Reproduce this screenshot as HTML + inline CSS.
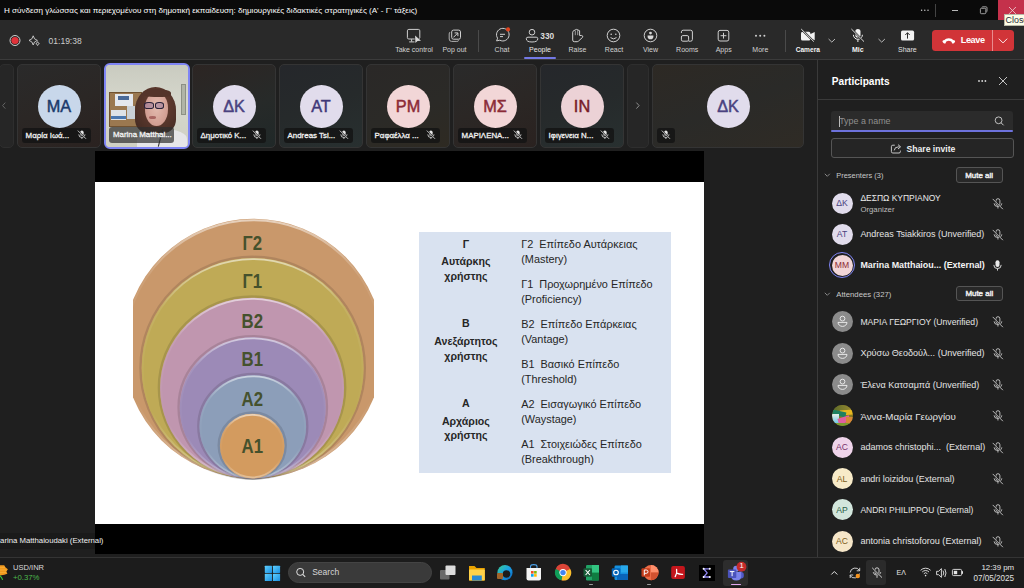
<!DOCTYPE html>
<html><head><meta charset="utf-8">
<style>
*{box-sizing:border-box;margin:0;padding:0}
html,body{width:1024px;height:588px;overflow:hidden;background:#1f1f1f;font-family:"Liberation Sans",sans-serif;color:#fff}
.a{position:absolute}
.t{position:absolute;white-space:nowrap;line-height:1}
svg{position:absolute;overflow:visible}
#titlebar{left:0;top:0;width:1024px;height:20px;background:#0a0a0a}
#toolbar{left:0;top:20px;width:1024px;height:39px;background:#292929}
#tbline{left:0;top:59px;width:1024px;height:1px;background:#3b3b3b}
.lbl{position:absolute;top:46px;font-size:7px;color:#d2d2d2;white-space:nowrap;line-height:8px;transform:translateX(-50%)}
.sep{position:absolute;width:1px;background:#4a4a4a}
.tile{position:absolute;top:64px;width:84px;height:84px;border-radius:5px;border:1px solid #343434;overflow:hidden}
.av{position:absolute;border-radius:50%;display:flex;align-items:center;justify-content:center;font-weight:400}
.nm{position:absolute;left:4.2px;top:62.6px;height:15.3px;border-radius:3px;background:rgba(20,20,20,.85);font-size:7.9px;font-weight:400;-webkit-text-stroke:0.3px;color:#f0f0f0;line-height:15px;padding-left:5px;white-space:nowrap}
.prow{position:absolute;left:818px;width:206px;height:31px}
.pav{position:absolute;left:14px;top:5px;width:21px;height:21px;border-radius:50%;display:flex;align-items:center;justify-content:center;font-size:8.5px}
.pn{position:absolute;left:42px;top:10px;font-size:9px;color:#e6e6e6;white-space:nowrap;line-height:10px}
.mic{position:absolute;left:173px;top:9px}
.tb{position:absolute;top:573px}
</style></head>
<body>
<!-- TITLE BAR -->
<div id="titlebar" class="a"></div>
<div class="t" style="left:4px;top:7.4px;font-size:8.05px;color:#ffffff">Η σύνδεση γλώσσας και περιεχομένου στη δημοτική εκπαίδευση: δημιουργικές διδακτικές στρατηγικές (Α' - Γ' τάξεις)</div>
<!-- window controls -->
<svg style="left:0;top:0" width="1" height="1"><circle cx="921.6" cy="10.3" r="0.75" fill="#c8c8c8"/><circle cx="924.8" cy="10.3" r="0.75" fill="#c8c8c8"/><circle cx="928" cy="10.3" r="0.75" fill="#c8c8c8"/></svg>
<div class="a" style="left:935px;top:4px;width:1px;height:13px;background:#444"></div>
<div class="a" style="left:951.5px;top:10px;width:6.5px;height:0.8px;background:#b8b8b8"></div>
<svg style="left:0;top:0" width="1" height="1"><rect x="980.4" y="8.3" width="5.4" height="5.4" rx="1" fill="none" stroke="#c0c0c0" stroke-width="0.8"/><path d="M981.8 7.4 Q982 6.8 982.8 6.8 H986 Q987 6.8 987 7.8 V11 Q987 11.8 986.4 12.1" fill="none" stroke="#c0c0c0" stroke-width="0.8"/></svg>
<div class="a" style="left:998px;top:0;width:26px;height:20.6px;background:#c4314b"></div>
<svg style="left:1008.9px;top:7.1px" width="8" height="8"><path d="M0 0L6.9 6.9M6.9 0L0 6.9" stroke="#f0d8dc" stroke-width="0.8"/></svg>

<!-- TOOLBAR -->
<div id="toolbar" class="a"></div>
<div id="tbline" class="a"></div>

<!-- left: record, sparkle, timer -->
<svg style="left:0;top:0" width="1" height="1">
 <circle cx="15" cy="40.5" r="5" fill="none" stroke="#cfcfcf" stroke-width="1"/>
 <circle cx="15" cy="40.5" r="3.6" fill="#e0323a"/>
 <path d="M33.2 35.8 Q33.8 39.6 37.4 40.4 Q33.8 41.2 33.2 45 Q32.6 41.2 29 40.4 Q32.6 39.6 33.2 35.8Z" fill="none" stroke="#cfcfcf" stroke-width="0.9" stroke-linejoin="round"/>
 <path d="M37.6 41.6 Q37.9 43.2 39.4 43.6 Q37.9 44 37.6 45.6 Q37.3 44 35.8 43.6 Q37.3 43.2 37.6 41.6Z" fill="none" stroke="#cfcfcf" stroke-width="0.8" stroke-linejoin="round"/>
</svg>
<div class="t" style="left:48.6px;top:37px;font-size:8.5px;color:#cccccc">01:19:38</div>

<!-- Take control -->
<svg style="left:0;top:0" width="1" height="1">
 <rect x="407.4" y="29.4" width="12.4" height="9.6" rx="1.4" fill="none" stroke="#d0d0d0" stroke-width="1"/>
 <path d="M411.6 39.2 V41.6 M409.2 41.9 H414.6" stroke="#d0d0d0" stroke-width="1"/>
 <path d="M415.1 35.6 L415.4 42.9 L417.5 40.9 L421 40.7 Z" fill="#d8d8d8" stroke="#292929" stroke-width="1.1" stroke-linejoin="round" paint-order="stroke"/>
</svg>
<div class="lbl" style="left:414px">Take control</div>
<!-- Pop out -->
<svg style="left:0;top:0" width="1" height="1">
 <path d="M450.1 32 Q449.2 32.6 449.2 34 V39 Q449.2 41.4 451.6 41.4 H456.8 Q458.2 41.4 458.8 40.4" fill="none" stroke="#b0b0b0" stroke-width="1"/>
 <rect x="451.7" y="30.1" width="8.8" height="9.1" rx="1.8" fill="#292929" stroke="#d0d0d0" stroke-width="1"/>
 <path d="M453.4 37.4 L457.6 33.2 M454.6 32.9 H457.9 V36.2" fill="none" stroke="#d0d0d0" stroke-width="1"/>
</svg>
<div class="lbl" style="left:454.5px">Pop out</div>
<div class="sep" style="left:478px;top:30px;height:22px"></div>
<!-- Chat -->
<svg style="left:0;top:0" width="1" height="1">
 <path d="M496.6 40.9 L497.6 38.2 A6.3 6.3 0 1 1 499.8 40.2 Z" fill="none" stroke="#d0d0d0" stroke-width="1" stroke-linejoin="round"/>
 <path d="M500 34.3 H505 M500 36.6 H503" stroke="#d0d0d0" stroke-width="1"/>
 <circle cx="508" cy="29.4" r="2.1" fill="#e2431d"/>
</svg>
<div class="lbl" style="left:502px">Chat</div>
<!-- People -->
<svg style="left:0;top:0" width="1" height="1">
 <circle cx="532" cy="32.2" r="2.8" fill="none" stroke="#d0d0d0" stroke-width="1"/>
 <path d="M526.3 38.7 Q526.3 37.2 528 37.2 H536.2 Q537.8 37.2 537.8 38.7 Q537.8 42 532 42 Q526.3 42 526.3 38.7Z" fill="none" stroke="#d0d0d0" stroke-width="1"/>
</svg>
<div class="t" style="left:540.3px;top:31.8px;font-size:8.3px;font-weight:700;color:#dcdcdc">330</div>
<div class="lbl" style="left:540px;color:#e8e8e8">People</div>
<div class="a" style="left:524px;top:57px;width:32px;height:2px;background:#7479e6;border-radius:1px"></div>
<!-- Raise -->
<svg style="left:0;top:0" width="1" height="1">
 <path d="M572.7 40 V32.2 Q572.7 31.1 573.9 30.6 L576.5 29.4 L579.6 30.7 V35.5 L581.7 35.5 Q583.4 35.9 582.6 37.3 L578.5 41.1 Q577.9 41.7 577 41.7 H574.3 Q572.7 41.7 572.7 40Z" fill="none" stroke="#d0d0d0" stroke-width="1" stroke-linejoin="round"/>
 <path d="M575.3 31 V35.2 M577.7 30.1 V35.2" stroke="#a8a8a8" stroke-width="0.9"/>
</svg>
<div class="lbl" style="left:577.5px">Raise</div>
<!-- React -->
<svg style="left:0;top:0" width="1" height="1">
 <circle cx="613.5" cy="35.5" r="6.3" fill="none" stroke="#d0d0d0" stroke-width="1"/>
 <circle cx="611.2" cy="34.2" r="0.8" fill="#d0d0d0"/><circle cx="615.8" cy="34.2" r="0.8" fill="#d0d0d0"/>
 <path d="M610.5 37.6 Q613.5 40.2 616.5 37.6" fill="none" stroke="#d0d0d0" stroke-width="1"/>
</svg>
<div class="lbl" style="left:614px">React</div>
<!-- View -->
<svg style="left:0;top:0" width="1" height="1">
 <circle cx="650.5" cy="35.5" r="6.3" fill="none" stroke="#d0d0d0" stroke-width="1"/>
 <circle cx="650.5" cy="33.1" r="1.4" fill="#d8d8d8"/>
 <path d="M647.6 35.6 H653.4 V36.4 A2.9 2.8 0 0 1 647.6 36.4 Z" fill="#d8d8d8"/>
</svg>
<div class="lbl" style="left:650.5px">View</div>
<!-- Rooms -->
<svg style="left:0;top:0" width="1" height="1">
 <path d="M681.4 33 V31.8 A1.8 1.8 0 0 1 683.2 30.2 H690.6 A1.8 1.8 0 0 1 692.4 32 V39.4 A1.8 1.8 0 0 1 690.6 41.2 H688.6" fill="none" stroke="#d0d0d0" stroke-width="1"/>
 <rect x="681.4" y="35.6" width="7.2" height="5.6" rx="1.4" fill="none" stroke="#d0d0d0" stroke-width="1"/>
</svg>
<div class="lbl" style="left:687.2px">Rooms</div>
<!-- Apps -->
<svg style="left:0;top:0" width="1" height="1">
 <rect x="718.2" y="30.4" width="10.6" height="10.6" rx="1.8" fill="none" stroke="#d0d0d0" stroke-width="1"/>
 <path d="M723.5 32.8 V38.6 M720.6 35.7 H726.4" stroke="#d0d0d0" stroke-width="1"/>
</svg>
<div class="lbl" style="left:723.7px">Apps</div>
<!-- More -->
<svg style="left:0;top:0" width="1" height="1">
 <circle cx="756" cy="35.7" r="1" fill="#d0d0d0"/><circle cx="760.2" cy="35.7" r="1" fill="#d0d0d0"/><circle cx="764.4" cy="35.7" r="1" fill="#d0d0d0"/>
</svg>
<div class="lbl" style="left:760.3px">More</div>
<div class="sep" style="left:784.5px;top:30px;height:22px"></div>
<!-- Camera -->
<svg style="left:0;top:0" width="1" height="1">
 <rect x="801" y="31.8" width="9.4" height="8.7" rx="1.6" fill="#f2f2f2"/>
 <path d="M810 34.2 L814.7 31.9 V40.3 L810 38.1Z" fill="#f2f2f2"/>
 <path d="M801.2 29 L813.8 41.6" stroke="#292929" stroke-width="2"/>
 <path d="M801.2 29 L813.8 41.6" stroke="#f2f2f2" stroke-width="0.9"/>
</svg>
<div class="lbl" style="left:807.8px;font-weight:700;font-size:6.6px;color:#f4f4f4">Camera</div>
<svg style="left:0;top:0" width="1" height="1"><path d="M828.6 39 L831.8 42.1 L835 39" fill="none" stroke="#c8c8c8" stroke-width="0.9"/></svg>
<!-- Mic -->
<svg style="left:0;top:0" width="1" height="1">
 <rect x="855.3" y="29" width="5.2" height="8.6" rx="2.6" fill="#f2f2f2"/>
 <path d="M853.4 34.8 A4.5 4.5 0 0 0 862.4 34.8 M857.9 39.4 V42" fill="none" stroke="#f2f2f2" stroke-width="1"/>
 <path d="M851.4 29 L864 41.6" stroke="#292929" stroke-width="2"/>
 <path d="M851.4 29 L864 41.6" stroke="#f2f2f2" stroke-width="0.9"/>
</svg>
<div class="lbl" style="left:857.8px;font-weight:700;font-size:7px;color:#f4f4f4">Mic</div>
<svg style="left:0;top:0" width="1" height="1"><path d="M878.5 39 L881.7 42.1 L884.9 39" fill="none" stroke="#c8c8c8" stroke-width="0.9"/></svg>
<!-- Share -->
<svg style="left:0;top:0" width="1" height="1">
 <rect x="901" y="30.6" width="13.1" height="9.9" rx="1.6" fill="#f2f2f2"/>
 <path d="M907.5 38.6 V32.8 M905.3 35 L907.5 32.7 L909.7 35" fill="none" stroke="#292929" stroke-width="1"/>
</svg>
<div class="lbl" style="left:907.4px;color:#e0e0e0">Share</div>
<!-- Leave -->
<div class="a" style="left:932.4px;top:30px;width:81.2px;height:20.8px;background:#d13438;border-radius:3.5px"></div>
<div class="a" style="left:992.2px;top:30px;width:0.8px;height:20.8px;background:#e98c8f"></div>
<svg style="left:0;top:0" width="1" height="1">
 <path d="M944.2 41.6 Q948.8 37.4 953.4 41.6" fill="none" stroke="#fff" stroke-width="2.5"/>
 <ellipse cx="944.2" cy="41.9" rx="1.9" ry="1.3" fill="#fff" transform="rotate(35 944.2 41.9)"/>
 <ellipse cx="953.4" cy="41.9" rx="1.9" ry="1.3" fill="#fff" transform="rotate(-35 953.4 41.9)"/>
 <path d="M998.8 38.7 L1003 42.9 L1007.2 38.7" fill="none" stroke="#fff" stroke-width="0.9"/>
</svg>
<div class="t" style="left:960.7px;top:36.1px;font-size:9.2px;letter-spacing:-0.42px;font-weight:700;color:#fff">Leave</div>

<!-- STRIP -->
<div class="tile" style="left:-1px;width:15px;background:#262626;border-color:#2e2e2e"></div><svg style="left:0;top:0" width="1" height="1"><path d="M5.3 102.6 L2.6 105.6 L5.3 108.6" fill="none" stroke="#6a6a6a" stroke-width="0.9"/></svg><div class="tile" style="left:17px;width:84px;background:linear-gradient(160deg,#2a2a2a 0%,#2b2725 50%,#2a2220 100%)"><div class="av" style="left:19.5px;top:19.8px;width:43px;height:43px;background:#c8d7ea;color:#1b3a6b;font-size:16.3px;-webkit-text-stroke:0.45px">MA</div><div class="nm" style="width:69px"><span style="position:absolute;left:3.4px;top:0">Μαρία Ιωά...</span><svg style="left:55px;top:2.5px" width="10" height="10"><rect x="3.2" y="0.6" width="3.4" height="5.4" rx="1.7" fill="#e6e6e6"/><path d="M1.8 4.4 A3.1 3.1 0 0 0 8 4.4 M4.9 7.5 V9" fill="none" stroke="#e6e6e6" stroke-width="0.8"/><path d="M0.8 0.6 L9 8.8" stroke="#1b1b1b" stroke-width="1.6"/><path d="M0.8 0.6 L9 8.8" stroke="#e6e6e6" stroke-width="0.8"/></svg></div></div><div class="tile" style="left:192px;width:84px;background:linear-gradient(160deg,#2c2523 0%,#272a29 55%,#202828 100%)"><div class="av" style="left:19.5px;top:19.8px;width:43px;height:43px;background:#e1dcec;color:#4a4280;font-size:16.3px;-webkit-text-stroke:0.45px">ΔΚ</div><div class="nm" style="width:69px"><span style="position:absolute;left:3.4px;top:0">Δημοτικό Κ...</span><svg style="left:55px;top:2.5px" width="10" height="10"><rect x="3.2" y="0.6" width="3.4" height="5.4" rx="1.7" fill="#e6e6e6"/><path d="M1.8 4.4 A3.1 3.1 0 0 0 8 4.4 M4.9 7.5 V9" fill="none" stroke="#e6e6e6" stroke-width="0.8"/><path d="M0.8 0.6 L9 8.8" stroke="#1b1b1b" stroke-width="1.6"/><path d="M0.8 0.6 L9 8.8" stroke="#e6e6e6" stroke-width="0.8"/></svg></div></div><div class="tile" style="left:279px;width:84px;background:linear-gradient(160deg,#25272b 0%,#262a2b 50%,#283030 100%)"><div class="av" style="left:19.5px;top:19.8px;width:43px;height:43px;background:#e1dcec;color:#3e3778;font-size:16.3px;-webkit-text-stroke:0.45px">AT</div><div class="nm" style="width:69px"><span style="position:absolute;left:3.4px;top:0">Andreas Tsi...</span><svg style="left:55px;top:2.5px" width="10" height="10"><rect x="3.2" y="0.6" width="3.4" height="5.4" rx="1.7" fill="#e6e6e6"/><path d="M1.8 4.4 A3.1 3.1 0 0 0 8 4.4 M4.9 7.5 V9" fill="none" stroke="#e6e6e6" stroke-width="0.8"/><path d="M0.8 0.6 L9 8.8" stroke="#1b1b1b" stroke-width="1.6"/><path d="M0.8 0.6 L9 8.8" stroke="#e6e6e6" stroke-width="0.8"/></svg></div></div><div class="tile" style="left:366px;width:84px;background:linear-gradient(160deg,#2a2827 0%,#2b2a27 55%,#2e2a22 100%)"><div class="av" style="left:19.5px;top:19.8px;width:43px;height:43px;background:#f2d6d7;color:#8c2a36;font-size:16.3px;-webkit-text-stroke:0.45px">PM</div><div class="nm" style="width:69px"><span style="position:absolute;left:3.4px;top:0">Ραφαέλλα ...</span><svg style="left:55px;top:2.5px" width="10" height="10"><rect x="3.2" y="0.6" width="3.4" height="5.4" rx="1.7" fill="#e6e6e6"/><path d="M1.8 4.4 A3.1 3.1 0 0 0 8 4.4 M4.9 7.5 V9" fill="none" stroke="#e6e6e6" stroke-width="0.8"/><path d="M0.8 0.6 L9 8.8" stroke="#1b1b1b" stroke-width="1.6"/><path d="M0.8 0.6 L9 8.8" stroke="#e6e6e6" stroke-width="0.8"/></svg></div></div><div class="tile" style="left:453px;width:84px;background:linear-gradient(160deg,#2a2a2a 0%,#2b2725 50%,#2a2220 100%)"><div class="av" style="left:19.5px;top:19.8px;width:43px;height:43px;background:#f2d6d7;color:#8a2b37;font-size:16.3px;-webkit-text-stroke:0.45px">ΜΣ</div><div class="nm" style="width:69px"><span style="position:absolute;left:3.4px;top:0">ΜΑΡΙΛΕΝΑ...</span><svg style="left:55px;top:2.5px" width="10" height="10"><rect x="3.2" y="0.6" width="3.4" height="5.4" rx="1.7" fill="#e6e6e6"/><path d="M1.8 4.4 A3.1 3.1 0 0 0 8 4.4 M4.9 7.5 V9" fill="none" stroke="#e6e6e6" stroke-width="0.8"/><path d="M0.8 0.6 L9 8.8" stroke="#1b1b1b" stroke-width="1.6"/><path d="M0.8 0.6 L9 8.8" stroke="#e6e6e6" stroke-width="0.8"/></svg></div></div><div class="tile" style="left:540px;width:84px;background:linear-gradient(160deg,#25272b 0%,#262a2b 50%,#283030 100%)"><div class="av" style="left:19.5px;top:19.8px;width:43px;height:43px;background:#ecd2d6;color:#761b28;font-size:16.3px;-webkit-text-stroke:0.45px">IN</div><div class="nm" style="width:69px"><span style="position:absolute;left:3.4px;top:0">Ιφιγενεια Ν...</span><svg style="left:55px;top:2.5px" width="10" height="10"><rect x="3.2" y="0.6" width="3.4" height="5.4" rx="1.7" fill="#e6e6e6"/><path d="M1.8 4.4 A3.1 3.1 0 0 0 8 4.4 M4.9 7.5 V9" fill="none" stroke="#e6e6e6" stroke-width="0.8"/><path d="M0.8 0.6 L9 8.8" stroke="#1b1b1b" stroke-width="1.6"/><path d="M0.8 0.6 L9 8.8" stroke="#e6e6e6" stroke-width="0.8"/></svg></div></div><div class="tile" style="left:627px;width:22px;background:#262626;border-color:#2e2e2e"></div><svg style="left:0;top:0" width="1" height="1"><path d="M636.4 102.6 L639.1 105.6 L636.4 108.6" fill="none" stroke="#9a9a9a" stroke-width="0.9"/></svg><div class="tile" style="left:652px;width:152px;background:linear-gradient(160deg,#2d2924 0%,#2a2a28 50%,#2f2b25 100%)"><div class="av" style="left:53.5px;top:19.8px;width:43px;height:43px;background:#e1dcec;color:#4a4280;font-size:16.3px;-webkit-text-stroke:0.45px">ΔΚ</div><div class="nm" style="width:18px"><svg style="left:4px;top:2.5px" width="10" height="10"><rect x="3.2" y="0.6" width="3.4" height="5.4" rx="1.7" fill="#e6e6e6"/><path d="M1.8 4.4 A3.1 3.1 0 0 0 8 4.4 M4.9 7.5 V9" fill="none" stroke="#e6e6e6" stroke-width="0.8"/><path d="M0.8 0.6 L9 8.8" stroke="#1b1b1b" stroke-width="1.6"/><path d="M0.8 0.6 L9 8.8" stroke="#e6e6e6" stroke-width="0.8"/></svg></div></div>
<div class="a" style="left:104px;top:63px;width:85.5px;height:85.5px;border-radius:6px;border:2px solid #7f85f5;overflow:hidden;background:#d4d4c8">
<div class="a" style="left:0;top:0;width:82px;height:82px;filter:blur(0.6px)">
 <div class="a" style="left:0;top:0;width:82px;height:82px;background:linear-gradient(180deg,#c9cbc0 0%,#d6d7cc 45%,#cfd0c4 100%)"></div>
 <div class="a" style="left:75px;top:18.5px;width:5px;height:31px;background:#b0b4a6;border:1px solid #8c9084"></div>
 <div class="a" style="left:2.5px;top:27px;width:33px;height:35px;background:#9a7850;border:1px solid #6f5232"></div>
 <div class="a" style="left:9px;top:28.5px;width:18px;height:12px;background:#e4e8ee"></div>
 <div class="a" style="left:12px;top:30.5px;width:11px;height:4px;background:#4a6a98"></div>
 <div class="a" style="left:5px;top:45px;width:15px;height:10px;background:#dde3e8"></div>
 <div class="a" style="left:5px;top:50.5px;width:15px;height:3px;background:#4a78b0"></div>
 <div class="a" style="left:21px;top:41px;width:8px;height:13px;background:#c9d0d6"></div>
 <div class="a" style="left:31px;top:64px;width:50px;height:22px;border-radius:45% 45% 0 0;background:#e6e6e8"></div>
 <div class="a" style="left:29px;top:21.6px;width:41px;height:46px;border-radius:50% 50% 30% 30%;background:radial-gradient(ellipse at 55% 40%,#6e4032 0%,#54342a 55%,#3e2820 100%)"></div>
 <div class="a" style="left:39.4px;top:27.5px;width:23px;height:33px;border-radius:45% 45% 50% 50%;background:radial-gradient(ellipse at 50% 40%,#e4bcb0 0%,#d3a094 65%,#b98a80 100%)"></div>
 <div class="a" style="left:37px;top:23.5px;width:28px;height:8px;border-radius:50% 50% 30% 40%;background:#54342a"></div>
 <div class="a" style="left:37.8px;top:37px;width:10px;height:6.5px;border-radius:40%;border:1.5px solid #2a2238;background:rgba(100,80,150,.3)"></div>
 <div class="a" style="left:48.8px;top:37px;width:9.6px;height:6.5px;border-radius:40%;border:1.5px solid #2a2238;background:rgba(100,80,150,.3)"></div>
 <div class="a" style="left:43px;top:51px;width:7px;height:2.6px;border-radius:50%;background:#a86460"></div>
 <div class="a" style="left:54px;top:64px;width:1.2px;height:18px;background:#2a2a2a;transform:rotate(14deg)"></div>
</div>
 <div class="a" style="left:3.4px;top:62.3px;width:65px;height:15.7px;border-radius:3px;background:rgba(45,45,45,.7);font-size:7.9px;font-weight:400;-webkit-text-stroke:0.3px;color:#f2f2f2;line-height:15.7px;padding-left:3.6px;white-space:nowrap">Marina Matthai...</div>
</div>


<!-- STAGE -->
<div class="a" style="left:95px;top:151px;width:609px;height:403px;background:#000"></div>
<div class="a" style="left:95.2px;top:182px;width:608.4px;height:342px;background:#fff;overflow:hidden">
 <svg style="left:0;top:0" width="608" height="342">
  <defs>
   <clipPath id="cl"><rect x="38" y="0" width="241" height="342"/></clipPath>
   <linearGradient id="rim" x1="0" y1="0" x2="0" y2="1"><stop offset="0" stop-color="#fff" stop-opacity="0.55"/><stop offset="0.22" stop-color="#fff" stop-opacity="0.08"/><stop offset="0.7" stop-color="#fff" stop-opacity="0"/><stop offset="1" stop-color="#fff" stop-opacity="0.35"/></linearGradient>
   <radialGradient id="shade" cx="50%" cy="35%" r="65%"><stop offset="0" stop-color="#fff" stop-opacity="0.06"/><stop offset="1" stop-color="#000" stop-opacity="0.06"/></radialGradient>
  </defs>
  <g clip-path="url(#cl)">
   <ellipse cx="158.5" cy="166.65" rx="130" ry="129.85" fill="#c9986b"/>
   <ellipse cx="158.5" cy="166.65" rx="128.5" ry="128.4" fill="none" stroke="url(#rim)" stroke-width="2"/>
  </g>
  <ellipse cx="157.65" cy="185.65" rx="112.2" ry="110.85" fill="none" stroke="#000" stroke-opacity="0.12" stroke-width="2.4"/>
  <ellipse cx="157.65" cy="186.25" rx="111" ry="110.25" fill="#bfaa56"/>
  <ellipse cx="157.65" cy="186.25" rx="109.9" ry="109.15" fill="none" stroke="url(#rim)" stroke-width="1.8"/>
  <ellipse cx="157.05" cy="205.5" rx="93.2" ry="91.0" fill="none" stroke="#000" stroke-opacity="0.12" stroke-width="2.4"/>
  <ellipse cx="157.05" cy="206.1" rx="92" ry="90.4" fill="#c096af"/>
  <ellipse cx="157.05" cy="206.1" rx="90.9" ry="89.30000000000001" fill="none" stroke="url(#rim)" stroke-width="1.8"/>
  <ellipse cx="157.75" cy="225.3" rx="74.2" ry="71.19999999999999" fill="none" stroke="#000" stroke-opacity="0.12" stroke-width="2.4"/>
  <ellipse cx="157.75" cy="225.9" rx="73" ry="70.6" fill="#9c8ab7"/>
  <ellipse cx="157.75" cy="225.9" rx="71.9" ry="69.5" fill="none" stroke="url(#rim)" stroke-width="1.8"/>
  <ellipse cx="157.8" cy="244.25" rx="54.5" ry="52.25" fill="none" stroke="#000" stroke-opacity="0.12" stroke-width="2.4"/>
  <ellipse cx="157.8" cy="244.85" rx="53.3" ry="51.65" fill="#8c9eb9"/>
  <ellipse cx="157.8" cy="244.85" rx="52.199999999999996" ry="50.55" fill="none" stroke="url(#rim)" stroke-width="1.8"/>
  <ellipse cx="157.2" cy="263.5" rx="33.5" ry="33.0" fill="none" stroke="#000" stroke-opacity="0.12" stroke-width="2.4"/>
  <ellipse cx="157.2" cy="264.1" rx="32.3" ry="32.4" fill="#d39b5f"/>
  <ellipse cx="157.2" cy="264.1" rx="31.199999999999996" ry="31.299999999999997" fill="none" stroke="url(#rim)" stroke-width="1.8"/>
  <g font-family="Liberation Sans" font-weight="700" font-size="19.5" fill="#45512d" text-anchor="middle">
   <text transform="translate(157.3 68.45) scale(0.86 1)" x="0" y="0">Γ2</text>
   <text transform="translate(157.3 106.1) scale(0.86 1)" x="0" y="0">Γ1</text>
   <text transform="translate(157.3 145.5) scale(0.86 1)" x="0" y="0">B2</text>
   <text transform="translate(157.3 184.4) scale(0.86 1)" x="0" y="0">B1</text>
   <text transform="translate(157.3 224.4) scale(0.86 1)" x="0" y="0">A2</text>
   <text transform="translate(157.3 270.5) scale(0.86 1)" x="0" y="0">A1</text>
  </g>
 </svg>
 <div class="a" style="left:324px;top:50.4px;width:252.2px;height:240.8px;background:#d9e2f0"></div>
 <div class="a" style="left:323.7px;top:50.4px;width:94px;font-size:10.6px;font-weight:700;color:#262626;text-align:center;line-height:14.5px">
  <div style="position:absolute;left:0;width:94px;top:4.3px">Γ</div>
  <div style="position:absolute;left:0;width:94px;top:22.1px">Αυτάρκης</div>
  <div style="position:absolute;left:0;width:94px;top:36.5px">χρήστης</div>
  <div style="position:absolute;left:0;width:94px;top:84.1px">Β</div>
  <div style="position:absolute;left:0;width:94px;top:101.9px">Ανεξάρτητος</div>
  <div style="position:absolute;left:0;width:94px;top:116.3px">χρήστης</div>
  <div style="position:absolute;left:0;width:94px;top:163.7px">Α</div>
  <div style="position:absolute;left:0;width:94px;top:181.5px">Αρχάριος</div>
  <div style="position:absolute;left:0;width:94px;top:195.9px">χρήστης</div>
 </div>
 <div class="a" style="left:426px;top:50.4px;width:150px;font-size:10.9px;color:#262626;line-height:14.5px;white-space:nowrap">
  <div style="position:absolute;left:0;top:5px">Γ2&nbsp; Επίπεδο Αυτάρκειας<br>(Mastery)</div>
  <div style="position:absolute;left:0;top:45px">Γ1&nbsp; Προχωρημένο Επίπεδο<br>(Proficiency)</div>
  <div style="position:absolute;left:0;top:85px">B2&nbsp; Επίπεδο Επάρκειας<br>(Vantage)</div>
  <div style="position:absolute;left:0;top:125px">B1&nbsp; Βασικό Επίπεδο<br>(Threshold)</div>
  <div style="position:absolute;left:0;top:165px">A2&nbsp; Εισαγωγικό Επίπεδο<br>(Waystage)</div>
  <div style="position:absolute;left:0;top:205px">A1&nbsp; Στοιχειώδες Επίπεδο<br>(Breakthrough)</div>
 </div>
</div>
<div class="a" style="left:0;top:533px;width:95px;height:16px;background:#1a1a1a"></div><div class="t" style="left:-6.4px;top:537.3px;font-size:7.75px;color:#f0f0f0">Marina Matthaioudaki (External)</div>


<!-- PANEL -->
<div class="a" style="left:817px;top:60px;width:1px;height:497px;background:#3a3a3a"></div>
<div class="a" style="left:818px;top:99px;width:206px;height:1px;background:#3a3a3a"></div>
<div class="t" style="left:831.8px;top:76.9px;font-size:10.1px;font-weight:700;color:#fff">Participants</div>
<svg style="left:0;top:0" width="1" height="1">
 <circle cx="979" cy="81" r="0.9" fill="#d6d6d6"/><circle cx="982.2" cy="81" r="0.9" fill="#d6d6d6"/><circle cx="985.4" cy="81" r="0.9" fill="#d6d6d6"/>
 <path d="M999 77 L1007 85 M1007 77 L999 85" stroke="#d6d6d6" stroke-width="0.9"/>
</svg>
<div class="a" style="left:831.2px;top:110.7px;width:182px;height:21px;background:#2b2b2b;border-radius:3px 3px 0 0"></div>
<div class="a" style="left:831.2px;top:129.9px;width:182px;height:1.7px;background:#6d72dc;border-radius:1px"></div>
<div class="a" style="left:838.6px;top:115.5px;width:0.9px;height:11px;background:#bbb"></div>
<div class="t" style="left:839.2px;top:117.3px;font-size:8.9px;color:#8f8f8f">Type a name</div>
<svg style="left:0;top:0" width="1" height="1"><circle cx="998.6" cy="120.3" r="3.4" fill="none" stroke="#cfcfcf" stroke-width="0.9"/><path d="M1001 122.7 L1003.6 125.3" stroke="#cfcfcf" stroke-width="1"/></svg>
<div class="a" style="left:831.2px;top:138px;width:182.4px;height:20.3px;border:1px solid #555;border-radius:3px;background:#252525"></div>
<svg style="left:0;top:0" width="1" height="1"><path d="M894.8 145.2 H892.8 A1.4 1.4 0 0 0 891.4 146.6 V151.6 A1.4 1.4 0 0 0 892.8 153 H899 A1.4 1.4 0 0 0 900.4 151.6 V150.6" fill="none" stroke="#d8d8d8" stroke-width="0.9"/><path d="M894.2 150.4 Q894.6 146.8 898.6 146.8 H899.6 M898 144.6 L900.6 146.8 L898 149" fill="none" stroke="#d8d8d8" stroke-width="0.9" stroke-linejoin="round"/></svg>
<div class="t" style="left:906.6px;top:144.6px;font-size:8.6px;font-weight:700;color:#f0f0f0">Share invite</div>
<svg style="left:0;top:0" width="1" height="1"><path d="M824.8 173.8 L827.3 176.3 L829.8 173.8" fill="none" stroke="#a0a0a0" stroke-width="0.8"/></svg>
<div class="t" style="left:836.3px;top:172px;font-size:7.45px;color:#c8c8c8">Presenters (3)</div>
<div class="a" style="left:956px;top:167.3px;width:47px;height:15.3px;border:1px solid #555;border-radius:3px;background:#282828"></div>
<div class="t" style="left:965.2px;top:171.6px;font-size:7.95px;font-weight:400;-webkit-text-stroke:0.45px;color:#ececec">Mute all</div>
<svg style="left:0;top:0" width="1" height="1"><path d="M824.8 292.8 L827.3 295.3 L829.8 292.8" fill="none" stroke="#a0a0a0" stroke-width="0.8"/></svg>
<div class="t" style="left:836.3px;top:290.8px;font-size:7.74px;color:#c8c8c8">Attendees (327)</div>
<div class="a" style="left:956.3px;top:286px;width:46.5px;height:15.3px;border:1px solid #555;border-radius:3px;background:#282828"></div>
<div class="t" style="left:965.4px;top:290.4px;font-size:7.95px;font-weight:400;-webkit-text-stroke:0.45px;color:#ececec">Mute all</div>
<div class="av" style="left:831.5px;top:192.5px;width:21px;height:21px;background:#e1dcec;color:#4a4280;font-size:8.6px">ΔΚ</div><div class="t" style="left:860.4px;top:194.00px;font-size:8.46px;color:#ececec">ΔΕΣΠΩ ΚΥΠΡΙΑΝΟΥ</div><div class="t" style="left:860.4px;top:206.20px;font-size:7.77px;color:#bdbdbd">Organizer</div><svg style="left:992px;top:197.50px" width="12" height="12"><rect x="4" y="0.7" width="3.9" height="6.6" rx="1.95" fill="none" stroke="#d6d6d6" stroke-width="0.85"/><path d="M2.1 5.4 A3.85 3.1 0 0 0 9.8 5.4 M5.95 8.5 V10.5" fill="none" stroke="#d6d6d6" stroke-width="0.85"/><path d="M0.7 0.9 L10.9 11.2" stroke="#1f1f1f" stroke-width="1.6"/><path d="M0.7 0.9 L10.9 11.2" stroke="#d6d6d6" stroke-width="0.85"/></svg><div class="av" style="left:831.5px;top:223.5px;width:21px;height:21px;background:#e1dcec;color:#4a4280;font-size:8.6px">AT</div><div class="t" style="left:860.4px;top:229.95px;font-size:8.97px;color:#e4e4e4">Andreas Tsiakkiros (Unverified)</div><svg style="left:992px;top:228.50px" width="12" height="12"><rect x="4" y="0.7" width="3.9" height="6.6" rx="1.95" fill="none" stroke="#d6d6d6" stroke-width="0.85"/><path d="M2.1 5.4 A3.85 3.1 0 0 0 9.8 5.4 M5.95 8.5 V10.5" fill="none" stroke="#d6d6d6" stroke-width="0.85"/><path d="M0.7 0.9 L10.9 11.2" stroke="#1f1f1f" stroke-width="1.6"/><path d="M0.7 0.9 L10.9 11.2" stroke="#d6d6d6" stroke-width="0.85"/></svg><div class="a" style="left:829px;top:252.2px;width:26px;height:26px;border-radius:50%;border:1.5px solid #7f85f5"></div><div class="av" style="left:831.5px;top:254.7px;width:21px;height:21px;background:#f2d6d7;color:#8c2a36;font-size:8.6px">MM</div><div class="t" style="left:860.4px;top:261.15px;font-size:8.93px;font-weight:700;color:#f4f4f4">Marina Matthaiou... (External)</div><svg style="left:992px;top:260.20px" width="11" height="11"><rect x="3.5" y="0.3" width="4" height="6.6" rx="2" fill="#e8e8e8"/><path d="M1.8 4.9 A3.7 3.7 0 0 0 9.2 4.9 M5.5 8.6 V10.6" fill="none" stroke="#e8e8e8" stroke-width="0.9"/></svg><div class="av" style="left:831.5px;top:311.1px;width:21px;height:21px;background:#8b8b8b"></div><svg style="left:831.5px;top:311.1px" width="21" height="21"><circle cx="10.5" cy="7.6" r="2.4" fill="none" stroke="#f0f0f0" stroke-width="0.9"/><path d="M6 11.4 H15 A4.5 4 0 0 1 6 11.4Z" fill="none" stroke="#f0f0f0" stroke-width="0.9"/></svg><div class="t" style="left:860.4px;top:317.58px;font-size:8.65px;color:#e4e4e4">ΜΑΡΙΑ ΓΕΩΡΓΙΟΥ (Unverified)</div><svg style="left:992px;top:316.10px" width="12" height="12"><rect x="4" y="0.7" width="3.9" height="6.6" rx="1.95" fill="none" stroke="#d6d6d6" stroke-width="0.85"/><path d="M2.1 5.4 A3.85 3.1 0 0 0 9.8 5.4 M5.95 8.5 V10.5" fill="none" stroke="#d6d6d6" stroke-width="0.85"/><path d="M0.7 0.9 L10.9 11.2" stroke="#1f1f1f" stroke-width="1.6"/><path d="M0.7 0.9 L10.9 11.2" stroke="#d6d6d6" stroke-width="0.85"/></svg><div class="av" style="left:831.5px;top:342.7px;width:21px;height:21px;background:#8b8b8b"></div><svg style="left:831.5px;top:342.7px" width="21" height="21"><circle cx="10.5" cy="7.6" r="2.4" fill="none" stroke="#f0f0f0" stroke-width="0.9"/><path d="M6 11.4 H15 A4.5 4 0 0 1 6 11.4Z" fill="none" stroke="#f0f0f0" stroke-width="0.9"/></svg><div class="t" style="left:860.4px;top:349.13px;font-size:9.09px;color:#e4e4e4">Χρύσω Θεοδούλ... (Unverified)</div><svg style="left:992px;top:347.70px" width="12" height="12"><rect x="4" y="0.7" width="3.9" height="6.6" rx="1.95" fill="none" stroke="#d6d6d6" stroke-width="0.85"/><path d="M2.1 5.4 A3.85 3.1 0 0 0 9.8 5.4 M5.95 8.5 V10.5" fill="none" stroke="#d6d6d6" stroke-width="0.85"/><path d="M0.7 0.9 L10.9 11.2" stroke="#1f1f1f" stroke-width="1.6"/><path d="M0.7 0.9 L10.9 11.2" stroke="#d6d6d6" stroke-width="0.85"/></svg><div class="av" style="left:831.5px;top:374.1px;width:21px;height:21px;background:#8b8b8b"></div><svg style="left:831.5px;top:374.1px" width="21" height="21"><circle cx="10.5" cy="7.6" r="2.4" fill="none" stroke="#f0f0f0" stroke-width="0.9"/><path d="M6 11.4 H15 A4.5 4 0 0 1 6 11.4Z" fill="none" stroke="#f0f0f0" stroke-width="0.9"/></svg><div class="t" style="left:860.4px;top:380.54px;font-size:9.04px;color:#e4e4e4">Έλενα Κατσαμπά (Unverified)</div><svg style="left:992px;top:379.10px" width="12" height="12"><rect x="4" y="0.7" width="3.9" height="6.6" rx="1.95" fill="none" stroke="#d6d6d6" stroke-width="0.85"/><path d="M2.1 5.4 A3.85 3.1 0 0 0 9.8 5.4 M5.95 8.5 V10.5" fill="none" stroke="#d6d6d6" stroke-width="0.85"/><path d="M0.7 0.9 L10.9 11.2" stroke="#1f1f1f" stroke-width="1.6"/><path d="M0.7 0.9 L10.9 11.2" stroke="#d6d6d6" stroke-width="0.85"/></svg><div class="a" style="left:831.5px;top:405.3px;width:21px;height:21px;border-radius:50%;overflow:hidden;background:#8a7a20;filter:blur(0.3px)">
<div class="a" style="left:0;top:0;width:21px;height:7px;background:linear-gradient(90deg,#5a6a2a,#9a8a30)"></div>
<div class="a" style="left:8px;top:5px;width:14px;height:5px;background:#e8b820;transform:rotate(-4deg)"></div>
<div class="a" style="left:0;top:6px;width:14px;height:5px;background:#1f8060;transform:rotate(12deg)"></div>
<div class="a" style="left:0;top:9px;width:7px;height:9px;background:linear-gradient(180deg,#e8efe8,#70c8e8)"></div>
<div class="a" style="left:6px;top:12px;width:12px;height:6px;background:#e060a0;transform:rotate(-18deg)"></div>
<div class="a" style="left:14px;top:12px;width:7px;height:7px;background:#d88838"></div>
<div class="a" style="left:4px;top:18px;width:16px;height:4px;background:#7a9a30"></div>
</div><div class="t" style="left:860.4px;top:411.65px;font-size:9.76px;color:#e4e4e4">Άννα-Μαρία Γεωργίου</div><svg style="left:992px;top:410.30px" width="12" height="12"><rect x="4" y="0.7" width="3.9" height="6.6" rx="1.95" fill="none" stroke="#d6d6d6" stroke-width="0.85"/><path d="M2.1 5.4 A3.85 3.1 0 0 0 9.8 5.4 M5.95 8.5 V10.5" fill="none" stroke="#d6d6d6" stroke-width="0.85"/><path d="M0.7 0.9 L10.9 11.2" stroke="#1f1f1f" stroke-width="1.6"/><path d="M0.7 0.9 L10.9 11.2" stroke="#d6d6d6" stroke-width="0.85"/></svg><div class="av" style="left:831.5px;top:436.8px;width:21px;height:21px;background:#efd4ea;color:#76306a;font-size:8.6px">AC</div><div class="t" style="left:860.4px;top:443.24px;font-size:9.02px;color:#e4e4e4">adamos christophi...&nbsp; (External)</div><svg style="left:992px;top:441.80px" width="12" height="12"><rect x="4" y="0.7" width="3.9" height="6.6" rx="1.95" fill="none" stroke="#d6d6d6" stroke-width="0.85"/><path d="M2.1 5.4 A3.85 3.1 0 0 0 9.8 5.4 M5.95 8.5 V10.5" fill="none" stroke="#d6d6d6" stroke-width="0.85"/><path d="M0.7 0.9 L10.9 11.2" stroke="#1f1f1f" stroke-width="1.6"/><path d="M0.7 0.9 L10.9 11.2" stroke="#d6d6d6" stroke-width="0.85"/></svg><div class="av" style="left:831.5px;top:468.1px;width:21px;height:21px;background:#f8ebc8;color:#7a5a14;font-size:8.6px">AL</div><div class="t" style="left:860.4px;top:474.54px;font-size:8.98px;color:#e4e4e4">andri loizidou (External)</div><svg style="left:992px;top:473.10px" width="12" height="12"><rect x="4" y="0.7" width="3.9" height="6.6" rx="1.95" fill="none" stroke="#d6d6d6" stroke-width="0.85"/><path d="M2.1 5.4 A3.85 3.1 0 0 0 9.8 5.4 M5.95 8.5 V10.5" fill="none" stroke="#d6d6d6" stroke-width="0.85"/><path d="M0.7 0.9 L10.9 11.2" stroke="#1f1f1f" stroke-width="1.6"/><path d="M0.7 0.9 L10.9 11.2" stroke="#d6d6d6" stroke-width="0.85"/></svg><div class="av" style="left:831.5px;top:499.4px;width:21px;height:21px;background:#d2e6dc;color:#285e46;font-size:8.6px">AP</div><div class="t" style="left:860.4px;top:505.90px;font-size:8.47px;color:#e4e4e4">ANDRI PHILIPPOU (External)</div><svg style="left:992px;top:504.40px" width="12" height="12"><rect x="4" y="0.7" width="3.9" height="6.6" rx="1.95" fill="none" stroke="#d6d6d6" stroke-width="0.85"/><path d="M2.1 5.4 A3.85 3.1 0 0 0 9.8 5.4 M5.95 8.5 V10.5" fill="none" stroke="#d6d6d6" stroke-width="0.85"/><path d="M0.7 0.9 L10.9 11.2" stroke="#1f1f1f" stroke-width="1.6"/><path d="M0.7 0.9 L10.9 11.2" stroke="#d6d6d6" stroke-width="0.85"/></svg><div class="av" style="left:831.5px;top:530.8px;width:21px;height:21px;background:#f6e6c8;color:#7c5c18;font-size:8.6px">AC</div><div class="t" style="left:860.4px;top:537.24px;font-size:9.06px;color:#e4e4e4">antonia christoforou (External)</div><svg style="left:992px;top:535.80px" width="12" height="12"><rect x="4" y="0.7" width="3.9" height="6.6" rx="1.95" fill="none" stroke="#d6d6d6" stroke-width="0.85"/><path d="M2.1 5.4 A3.85 3.1 0 0 0 9.8 5.4 M5.95 8.5 V10.5" fill="none" stroke="#d6d6d6" stroke-width="0.85"/><path d="M0.7 0.9 L10.9 11.2" stroke="#1f1f1f" stroke-width="1.6"/><path d="M0.7 0.9 L10.9 11.2" stroke="#d6d6d6" stroke-width="0.85"/></svg>

<!-- TASKBAR -->
<div class="a" style="left:0;top:557px;width:1024px;height:31px;background:#1c1c1c"></div>
<div class="a" style="left:0;top:556.5px;width:1024px;height:1px;background:#343434"></div>
<!-- weather widget -->
<svg style="left:0;top:0" width="1" height="1">
 <path d="M-2 565.2 H4.2 L5.6 567.6 L7.9 569.2 L6.4 571.4 L7.4 573.8 L4.4 574.8 L0 575.4 H-2Z" fill="#f29a1f"/>
 <path d="M-1 567.5 H5 M-1 570 H6.8 M-1 572.5 H6" stroke="#ffc14a" stroke-width="0.6" opacity="0.7"/>
 <path d="M-1 575.6 Q1.6 576.4 2.6 579.8" fill="none" stroke="#3cc43c" stroke-width="1.2"/>
</svg>
<div class="t" style="left:13px;top:564.3px;font-size:7.55px;color:#dadada">USD/INR</div>
<div class="t" style="left:13px;top:574.1px;font-size:7.75px;color:#4cba4c">+0.37%</div>
<!-- windows logo -->
<svg style="left:0;top:0" width="1" height="1">
 <defs><linearGradient id="wg" x1="0" y1="0" x2="1" y2="1"><stop offset="0" stop-color="#5fd0ff"/><stop offset="1" stop-color="#1a8fe0"/></linearGradient></defs>
 <rect x="264.8" y="565.7" width="7.2" height="7.2" rx="0.6" fill="url(#wg)"/>
 <rect x="272.9" y="565.7" width="7.2" height="7.2" rx="0.6" fill="url(#wg)"/>
 <rect x="264.8" y="573.8" width="7.2" height="7.2" rx="0.6" fill="url(#wg)"/>
 <rect x="272.9" y="573.8" width="7.2" height="7.2" rx="0.6" fill="url(#wg)"/>
</svg>
<!-- search pill -->
<div class="a" style="left:288px;top:562.2px;width:144.2px;height:21.3px;border-radius:10.7px;background:#3a3a3a;border:0.5px solid #444"></div>
<svg style="left:0;top:0" width="1" height="1"><circle cx="300.2" cy="571.9" r="3.5" fill="none" stroke="#e0e0e0" stroke-width="1"/><path d="M302.7 574.4 L305.2 576.9" stroke="#e0e0e0" stroke-width="1.1"/></svg>
<div class="t" style="left:312.2px;top:568.2px;font-size:8.52px;color:#d6d6d6">Search</div>
<!-- task view -->
<svg style="left:0;top:0" width="1" height="1">
 <rect x="440" y="570" width="9.5" height="9.5" rx="1" fill="#6a6a6a"/>
 <rect x="445.5" y="565.5" width="10" height="9.5" rx="1" fill="#dcdcdc"/>
</svg>
<!-- file explorer -->
<svg style="left:0;top:0" width="1" height="1">
 <path d="M469 566 H474.5 L476.5 568 H484.8 V580.5 H469Z" fill="#e8a200"/>
 <rect x="469" y="569.5" width="15.8" height="11" rx="0.8" fill="#ffd24a"/>
 <rect x="472" y="575.5" width="9.8" height="5" fill="#2a8ad4"/>
</svg>
<!-- edge -->
<svg style="left:0;top:0" width="1" height="1">
 <defs><linearGradient id="eg" x1="0" y1="0" x2="1" y2="1"><stop offset="0" stop-color="#3ccf8e"/><stop offset="0.5" stop-color="#1aa0e8"/><stop offset="1" stop-color="#0b5fb5"/></linearGradient></defs>
 <circle cx="505" cy="572.6" r="7.6" fill="url(#eg)"/>
 <circle cx="506.5" cy="574" r="3.8" fill="#1c1c1c"/>
 <rect x="497" y="573" width="6" height="6" rx="1" fill="#a0642a"/>
</svg>
<!-- store -->
<svg style="left:0;top:0" width="1" height="1">
 <path d="M526.5 568 H541 V578.5 Q541 580.5 539 580.5 H528.5 Q526.5 580.5 526.5 578.5Z" fill="#f4f4f4"/>
 <path d="M530.5 568 V566.5 Q530.5 564.6 533.7 564.6 Q537 564.6 537 566.5 V568" fill="none" stroke="#4aa0e8" stroke-width="1.1"/>
 <rect x="531" y="571" width="2.6" height="2.6" fill="#f25022"/><rect x="534.1" y="571" width="2.6" height="2.6" fill="#7fba00"/>
 <rect x="531" y="574.1" width="2.6" height="2.6" fill="#00a4ef"/><rect x="534.1" y="574.1" width="2.6" height="2.6" fill="#ffb900"/>
</svg>
<!-- chrome -->
<svg style="left:0;top:0" width="1" height="1">
 <circle cx="563" cy="572.6" r="7.8" fill="#db4437"/>
 <path d="M563 572.6 L570.1 568.7 A7.8 7.8 0 0 1 561.5 580.3Z" fill="#fbc02d"/>
 <path d="M563 572.6 L561.5 580.3 A7.8 7.8 0 0 1 555.9 568.7Z" fill="#0f9d58"/>
 <path d="M563 572.6 L555.9 568.7 L557 566.5 A7.8 7.8 0 0 1 570.1 568.7Z" fill="#db4437"/>
 <circle cx="563" cy="572.6" r="3.6" fill="#fff"/>
 <circle cx="563" cy="572.6" r="2.7" fill="#4285f4"/>
</svg>
<!-- excel -->
<svg style="left:0;top:0" width="1" height="1">
 <rect x="586" y="565" width="13" height="15.5" rx="1.2" fill="#21a366"/>
 <rect x="592" y="565" width="7" height="7.7" fill="#33c481"/>
 <rect x="592" y="572.7" width="7" height="7.8" fill="#107c41"/>
 <rect x="583.5" y="568.2" width="8.5" height="8.5" rx="1" fill="#185c37"/>
 <path d="M585.6 570 L589.9 575 M589.9 570 L585.6 575" stroke="#fff" stroke-width="1.1"/>
</svg>
<div class="a" style="left:589.3px;top:583.6px;width:4px;height:1.2px;background:#9a9a9a;border-radius:1px"></div>
<!-- outlook -->
<svg style="left:0;top:0" width="1" height="1">
 <rect x="614.5" y="565.5" width="13.5" height="14.5" rx="1.2" fill="#1490df"/>
 <rect x="621" y="565.5" width="7" height="7" fill="#28a8ea"/>
 <path d="M617 574 L628 574 L628 580 L617 580Z" fill="#0a64b8"/>
 <rect x="611.8" y="568.3" width="8.5" height="8.5" rx="1" fill="#0364b8"/>
 <circle cx="616" cy="572.5" r="2.3" fill="none" stroke="#fff" stroke-width="1.1"/>
</svg>
<!-- powerpoint -->
<svg style="left:0;top:0" width="1" height="1">
 <circle cx="651" cy="572.6" r="7.6" fill="#ed6c47"/>
 <path d="M651 565 A7.6 7.6 0 0 1 658.6 572.6 H651Z" fill="#ff8f6b"/>
 <path d="M651 572.6 H658.6 A7.6 7.6 0 0 1 651 580.2Z" fill="#d35230"/>
 <rect x="641.5" y="568.3" width="8.5" height="8.5" rx="1" fill="#c43e1c"/>
 <path d="M644.3 575.4 V570 H646.3 Q648 570 648 571.7 Q648 573.3 646.3 573.3 H644.3" fill="none" stroke="#fff" stroke-width="1"/>
</svg>
<div class="a" style="left:647.3px;top:583.6px;width:4px;height:1.2px;background:#9a9a9a;border-radius:1px"></div>
<!-- acrobat -->
<svg style="left:0;top:0" width="1" height="1">
 <rect x="671.2" y="566" width="13.7" height="12.9" rx="2" fill="#c4161c"/>
 <path d="M676.6 569.4 Q677.4 573.4 675.2 576.6 M676.9 573.2 Q679.6 574.6 682.6 574.4" fill="none" stroke="#fff" stroke-width="1.3" stroke-linecap="round"/>
</svg>
<!-- sigma -->
<div class="a" style="left:699px;top:564.8px;width:15.7px;height:16.1px;background:#000"></div>
<svg style="left:0;top:0" width="1" height="1">
 <path d="M703.6 568.8 H709.8 M703.6 568.8 L707.2 572.9 L703.6 577 H709.8" fill="none" stroke="#8f86f0" stroke-width="1.3" stroke-linejoin="round"/>
 <circle cx="703.6" cy="568.8" r="1" fill="#fff"/><circle cx="709.8" cy="568.8" r="1" fill="#fff"/><circle cx="703.6" cy="577" r="1" fill="#fff"/><circle cx="709.8" cy="577" r="1" fill="#fff"/>
</svg>
<!-- teams -->
<div class="a" style="left:722.5px;top:559.9px;width:25.9px;height:25.9px;border-radius:3px;background:#2d2d2d"></div>
<svg style="left:0;top:0" width="1" height="1">
 <circle cx="740.6" cy="569.4" r="2.4" fill="#5b62d1"/>
 <rect x="737.2" y="572" width="6.6" height="6.4" rx="2.6" fill="#5059c9"/>
 <circle cx="736.2" cy="568.8" r="3" fill="#7b83eb"/>
 <path d="M731.4 572 H741.2 V576.4 Q741.2 580.4 736.3 580.4 Q731.4 580.4 731.4 576.4Z" fill="#7b83eb"/>
 <rect x="727.9" y="569.6" width="8.4" height="8.4" rx="1" fill="#4b53bc"/>
 <path d="M729.8 571.6 H734.4 M732.1 571.6 V576.2" stroke="#fff" stroke-width="1"/>
 <circle cx="741.5" cy="566.7" r="4.9" fill="#c42b2b"/>
</svg>
<div class="t" style="left:739.4px;top:562.4px;font-size:7.6px;color:#fff">1</div>
<div class="a" style="left:730.8px;top:583.6px;width:10.4px;height:1.8px;background:#e2a7f0;border-radius:1px"></div>
<!-- tray -->
<svg style="left:0;top:0" width="1" height="1">
 <path d="M831.3 574.5 L834.3 571.5 L837.3 574.5" fill="none" stroke="#e6e6e6" stroke-width="1"/>
 <path d="M850.2 572.5 A5 5 0 0 1 859.5 570.5 M859.7 567.8 V570.8 H856.7" fill="none" stroke="#e0e0e0" stroke-width="0.9"/>
 <path d="M859.4 573.5 A5 5 0 0 1 850 575.3 M850.2 578 V575 H853.2" fill="none" stroke="#e0e0e0" stroke-width="0.9"/>
 <circle cx="857.8" cy="576" r="2.2" fill="#f7941d"/>
</svg>
<div class="a" style="left:866.2px;top:560.4px;width:20.1px;height:25.1px;border-radius:3px;background:#2b2b2b"></div>
<svg style="left:870.5px;top:567px" width="12" height="12"><rect x="4" y="0.8" width="4" height="6.2" rx="2" fill="none" stroke="#e0e0e0" stroke-width="0.9"/><path d="M2.2 5.2 A3.9 3.9 0 0 0 9.8 5.2 M6 9 V10.8" fill="none" stroke="#e0e0e0" stroke-width="0.9"/><path d="M1.2 0.8 L11 10.6" stroke="#2b2b2b" stroke-width="1.8"/><path d="M1.2 0.8 L11 10.6" stroke="#e0e0e0" stroke-width="0.9"/></svg>
<div class="t" style="left:896.5px;top:569px;font-size:7px;color:#e6e6e6">ΕΛ</div>
<svg style="left:0;top:0" width="1" height="1">
 <path d="M920.6 570.3 A7 7 0 0 1 930.6 570.3 M922.2 572 A4.7 4.7 0 0 1 929 572 M923.8 573.7 A2.4 2.4 0 0 1 927.4 573.7" fill="none" stroke="#e6e6e6" stroke-width="0.9"/>
 <circle cx="925.6" cy="575.6" r="0.8" fill="#e6e6e6"/>
 <path d="M936.6 571.3 H938.6 L941.4 568.6 V577.4 L938.6 574.7 H936.6Z" fill="none" stroke="#e6e6e6" stroke-width="0.9"/>
 <path d="M943 570.6 Q944.6 573 943 575.4 M944.8 569 Q947.2 573 944.8 577" fill="none" stroke="#e6e6e6" stroke-width="0.9"/>
 <rect x="952.4" y="569.4" width="9.2" height="6.2" rx="1.2" fill="none" stroke="#e6e6e6" stroke-width="0.9"/>
 <rect x="953.8" y="570.8" width="3.4" height="3.4" fill="#e6e6e6"/>
 <rect x="962" y="571.2" width="1" height="2.6" fill="#e6e6e6"/>
</svg>
<div class="t" style="left:981.4px;top:564.4px;font-size:7.87px;color:#e6e6e6">12:39 pm</div>
<div class="t" style="left:973.4px;top:575px;font-size:8.15px;color:#e0e0e0">07/05/2025</div>

<div class="a" style="left:1003.8px;top:13.8px;width:30px;height:12.2px;background:#fdfde6;border:1px solid #b8b8a8"></div>
<div class="t" style="left:1005.6px;top:15.6px;font-size:8.9px;color:#1f2a3c">Close</div>
</body></html>
